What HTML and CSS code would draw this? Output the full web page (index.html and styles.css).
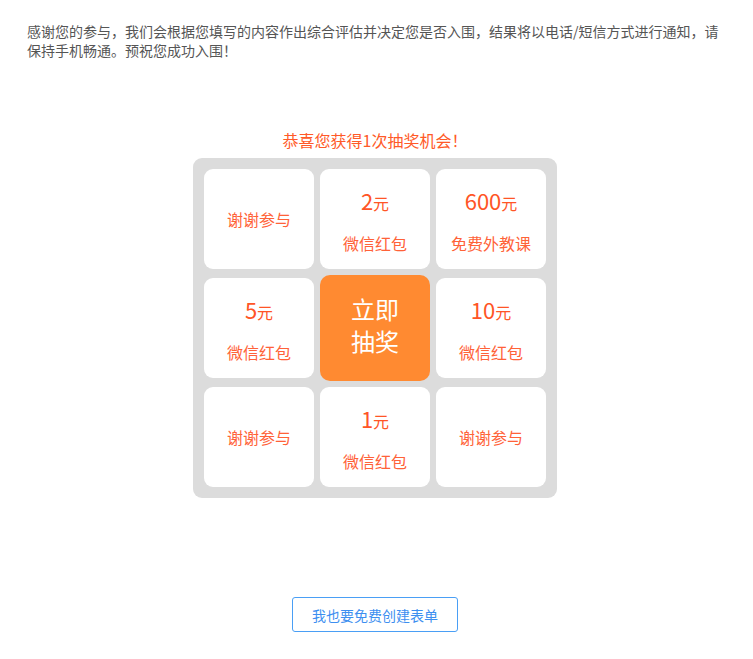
FILE: index.html
```html
<!DOCTYPE html>
<html lang="zh-CN">
<head>
<meta charset="utf-8">
<title>抽奖</title>
<link rel="stylesheet" href="styles.css">
</head>
<body>
<div class="page">
  <p class="intro">感谢您的参与，我们会根据您填写的内容作出综合评估并决定您是否入围，结果将以电话/短信方式进行通知，请保持手机畅通。预祝您成功入围！</p>
  <div class="lottery">
    <div class="title">恭喜您获得1次抽奖机会！</div>
    <div class="board">
      <div class="cell"><span class="label">谢谢参与</span></div>
      <div class="cell prize"><span class="amount">2<small>元</small></span><span class="label">微信红包</span></div>
      <div class="cell prize"><span class="amount">600<small>元</small></span><span class="label">免费外教课</span></div>
      <div class="cell prize"><span class="amount">5<small>元</small></span><span class="label">微信红包</span></div>
      <div class="start">立即<br>抽奖</div>
      <div class="cell prize"><span class="amount">10<small>元</small></span><span class="label">微信红包</span></div>
      <div class="cell"><span class="label">谢谢参与</span></div>
      <div class="cell prize"><span class="amount">1<small>元</small></span><span class="label">微信红包</span></div>
      <div class="cell"><span class="label">谢谢参与</span></div>
    </div>
  </div>
  <div class="footer">
    <a class="create" href="#">我也要免费创建表单</a>
  </div>
</div>
</body>
</html>
```
FILE: styles.css
```css
html, body {
  margin: 0;
  padding: 0;
  background: #fff;
}
body {
  font-family: "Noto Sans CJK SC", "Noto Sans", "Liberation Sans", sans-serif;
}
.page {
  width: 750px;
}
.intro {
  margin: 0;
  padding: 22px 27px 0;
  font-size: 14px;
  line-height: 19px;
  color: #555;
}
.lottery {
  display: flex;
  flex-direction: column;
  align-items: center;
  margin-top: 70px;
}
.title {
  font-size: 16px;
  line-height: 20px;
  color: #ff5a28;
  margin-bottom: 8px;
}
.board {
  display: grid;
  grid-template-columns: repeat(3, 110px);
  grid-template-rows: repeat(3, 100px);
  gap: 9px 6px;
  padding: 11px;
  background: #dcdcdc;
  border-radius: 9px;
}
.cell {
  background: #fff;
  border-radius: 9px;
  display: flex;
  flex-direction: column;
  align-items: center;
  justify-content: center;
  color: #ff6238;
}
.cell.prize {
  justify-content: flex-start;
  padding-top: 18px;
  box-sizing: border-box;
}
.amount {
  font-size: 22px;
  line-height: 26px;
  color: #ff5526;
}
.amount small {
  font-size: 16px;
}
.label {
  font-size: 16px;
  line-height: 20px;
}
.prize .label {
  margin-top: 17px;
}
.start {
  margin: -3px 0;
  padding-bottom: 7px;
  box-sizing: border-box;
  background: #ff8a31;
  border-radius: 10px;
  color: #fff;
  font-size: 24px;
  line-height: 32px;
  display: flex;
  align-items: center;
  justify-content: center;
  text-align: center;
}
.footer {
  display: flex;
  justify-content: center;
  margin-top: 99px;
}
.create {
  display: flex;
  align-items: center;
  justify-content: center;
  width: 166px;
  height: 35px;
  box-sizing: border-box;
  border: 1px solid #4a9ff5;
  border-radius: 3px;
  color: #3d8ff0;
  font-size: 14px;
  text-decoration: none;
}
```
